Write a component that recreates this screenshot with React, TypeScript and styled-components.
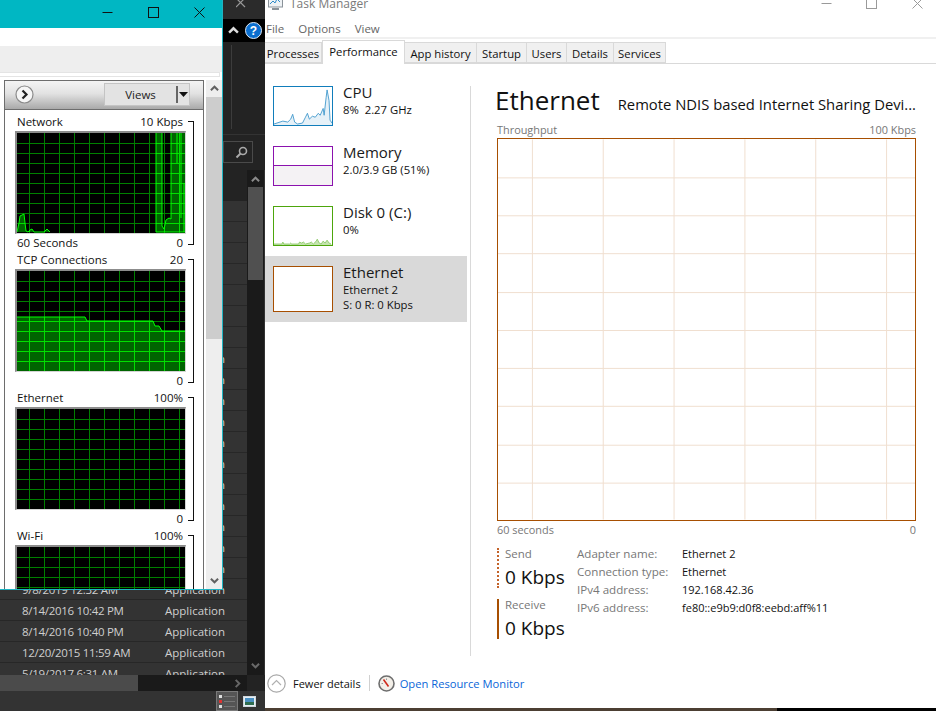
import React from "react";
import styled, { createGlobalStyle } from "styled-components";

const Global = createGlobalStyle`
  html, body { margin: 0; padding: 0; background: #000; }
  * { box-sizing: border-box; }
`;

const FONT = `"Open Sans", "Noto Sans", sans-serif`;

const Desktop = styled.div`
  position: relative;
  width: 936px;
  height: 711px;
  overflow: hidden;
  font-family: ${FONT};
  background: linear-gradient(to right, #4c3f33 777px, #000 777px);
`;

/* ---------- dark window behind ---------- */
const DarkWindow = styled.div`
  position: absolute;
  left: 0;
  top: 0;
  width: 265px;
  height: 711px;
  display: flex;
  flex-direction: column;
  background: #333;
  color: #d0d0d0;
`;
const DarkTitle = styled.div`
  height: 19px;
  background: #2b2b2b;
  display: flex;
  justify-content: flex-end;
  padding-right: 19px;
  overflow: hidden;
`;
const DarkBand = styled.div`
  height: 23px;
  background: #000;
  display: flex;
  align-items: center;
  justify-content: flex-end;
  gap: 6px;
  padding-right: 3px;
`;
const DarkRibbon = styled.div`
  height: 93px;
  background: #232323;
  border-bottom: 1px solid #333;
  display: flex;
  justify-content: flex-end;
  padding: 3px 33px 5px 0;
`;
const RibbonLine = styled.div`
  width: 1px;
  background: #3c3c3c;
`;
const DarkSearchRow = styled.div`
  height: 35px;
  background: #232323;
  display: flex;
  justify-content: flex-end;
  padding: 6px 12px 7px 0;
`;
const DarkSearch = styled.div`
  width: 30px;
  border: 1px solid #4a4a4a;
  display: flex;
  align-items: center;
  justify-content: center;
`;
const DarkListWrap = styled.div`
  flex: 1;
  display: flex;
  min-height: 0;
`;
const DarkList = styled.div`
  flex: 1;
  min-width: 0;
  overflow: hidden;
`;
const DarkHead = styled.div`
  height: 31px;
  background: #232323;
`;
const DarkRow = styled.div`
  height: 21px;
  padding-top: 1px;
  display: flex;
  align-items: center;
  border-bottom: 1px solid #272727;
  background: #333;
  font-size: 11.5px;
  color: #cfcfcf;
  white-space: nowrap;
  overflow: hidden;
`;
const DateCell = styled.span`
  width: 165px;
  padding-left: 22px;
  flex: none;
  letter-spacing: -0.3px;
`;
const DarkVScroll = styled.div`
  width: 17px;
  margin-right: 1px;
  background: #1a1a1a;
  display: flex;
  flex-direction: column;
  align-items: center;
  justify-content: space-between;
  padding: 5px 0 5px;
`;
const DarkVThumb = styled.div`
  width: 15px;
  height: 93px;
  background: #505050;
  margin-top: 3px;
`;
const Spacer = styled.div`
  flex: 1;
`;
const DarkHTrack = styled.div`
  height: 16px;
  background: #232323;
`;
const DarkHScroll = styled.div`
  height: 16px;
  background: #1a1a1a;
  display: flex;
  align-items: center;
  margin-right: 18px;
`;
const DarkHThumb = styled.div`
  width: 138px;
  height: 16px;
  background: #4b4b4b;
`;
const DarkHArrow = styled.div`
  margin-left: auto;
  margin-right: 5px;
  display: flex;
`;
const DarkStatus = styled.div`
  height: 20px;
  background: #333;
  display: flex;
  justify-content: flex-end;
  align-items: stretch;
  gap: 5px;
  padding-right: 9px;
`;
const ViewToggle = styled.div<{ $on?: boolean }>`
  width: ${(p) => (p.$on ? 22 : 13)}px;
  display: flex;
  align-items: center;
  justify-content: center;
  background: ${(p) => (p.$on ? "#555" : "transparent")};
  border: ${(p) => (p.$on ? "1px solid #7a7a7a" : "0")};
`;

/* ---------- resource monitor window ---------- */
const MonitorWindow = styled.div`
  position: absolute;
  left: 0;
  top: 0;
  width: 223px;
  height: 590px;
  background: #fff;
  border-right: 1px solid #1fb4c2;
  border-bottom: 1px solid #1fb4c2;
  display: flex;
  flex-direction: column;
  overflow: hidden;
`;
const MonitorTitle = styled.div`
  height: 28px;
  flex: none;
  background: #00b7c3;
  display: flex;
  justify-content: flex-end;
`;
const MonitorBtn = styled.div`
  width: 46px;
  height: 25px;
  display: flex;
  align-items: center;
  justify-content: center;
`;
const MonitorMenu = styled.div`
  height: 18px;
  flex: none;
  background: #fff;
`;
const MonitorBand = styled.div`
  height: 26px;
  flex: none;
  background: #eee;
`;
const MonitorRule = styled.div`
  height: 5px;
  flex: none;
  margin-right: 2px;
  background: #fff;
  border: 1px solid #e4e4e4;
  border-left: 0;
`;
const MonitorBody = styled.div`
  flex: 1;
  min-height: 0;
  display: flex;
  padding: 3px 0 0 4px;
`;
const Panel = styled.div`
  width: 200px;
  border: 1px solid #6d6d6d;
  border-bottom: 0;
  display: flex;
  flex-direction: column;
  overflow: hidden;
  font-size: 11.5px;
  color: #111;
`;
const PanelHead = styled.div`
  height: 29px;
  flex: none;
  background: linear-gradient(#f4f4f4, #e2e2e2 45%, #a9a9a9);
  border-bottom: 1px solid #6d6d6d;
  display: flex;
  align-items: center;
  justify-content: space-between;
  padding: 0 13px 2px 10px;
`;
const ViewsBtn = styled.div`
  width: 86px;
  height: 23px;
  background: #e3e3e3;
  border: 1px solid #c4c4c4;
  display: flex;
  align-items: center;
  font-size: 11.5px;
  color: #222;
`;
const ViewsLabel = styled.span`
  flex: 1;
  text-align: center;
`;
const ViewsCaret = styled.span`
  width: 13px;
  height: 17px;
  border-left: 2px solid #666;
  display: flex;
  align-items: center;
  justify-content: center;
`;
const PanelBody = styled.div`
  padding: 3px 0 0 10px;
`;
const GraphBlock = styled.div`
  display: flex;
  height: 138px;
`;
const GraphCol = styled.div`
  width: 171px;
  flex: none;
`;
const GraphTop = styled.div`
  height: 18px;
  padding: 0 3px 2px 2px;
  display: flex;
  align-items: center;
  justify-content: space-between;
  white-space: nowrap;
`;
const GraphFoot = styled.div`
  height: 17px;
  padding: 0 3px 0 2px;
  display: flex;
  align-items: center;
  justify-content: space-between;
  white-space: nowrap;
`;
const GraphFrame = styled.div`
  height: 103px;
  border-top: 2px solid #8c8c8c;
  border-left: 2px solid #8c8c8c;
  border-right: 1px solid #d4d4d4;
  border-bottom: 1px solid #d4d4d4;
  background: #000;
  display: flex;
`;
const Bracket = styled.div`
  width: 6px;
  flex: none;
  margin: 8px 0 6px 2px;
  border: 1px solid #111;
  border-left: 0;
`;
const VScroll = styled.div`
  width: 16px;
  margin-left: 2px;
  background: #eee;
  display: flex;
  flex-direction: column;
  align-items: center;
  justify-content: space-between;
  padding: 4px 0 4px;
`;
const VThumb = styled.div`
  width: 16px;
  height: 242px;
  background: #cdcdcd;
  margin-top: 4px;
`;

/* ---------- task manager ---------- */
const TaskWindow = styled.div`
  position: absolute;
  left: 265px;
  top: 0;
  width: 671px;
  height: 708px;
  background: #fff;
  display: flex;
  flex-direction: column;
  overflow: hidden;
  font-size: 11.5px;
  color: #111;
`;
const TaskTitle = styled.div`
  height: 20px;
  flex: none;
  display: flex;
  justify-content: space-between;
  overflow: hidden;
`;
const TaskName = styled.div`
  display: flex;
  gap: 7px;
  padding-left: 3px;
  margin-top: -6px;
  height: 18px;
  align-items: center;
  color: #7a7a7a;
  font-size: 12px;
`;
const TaskCtrls = styled.div`
  display: flex;
  margin-right: -4px;
  margin-top: -3px;
  height: 12px;
`;
const TaskCtrl = styled.div`
  width: 45.5px;
  display: flex;
  align-items: center;
  justify-content: center;
`;
const MenuBar = styled.div`
  height: 17px;
  flex: none;
  display: flex;
  align-items: center;
  gap: 14px;
  padding-left: 1px;
  color: #666;
`;
const MenuRule = styled.div`
  height: 2px;
  flex: none;
  background: #f0f0f0;
`;
const TabBar = styled.div`
  height: 25px;
  flex: none;
  display: flex;
  align-items: flex-end;
  border-bottom: 1px solid #d9d9d9;
`;
const Tab = styled.div<{ $w: number; $on?: boolean }>`
  width: ${(p) => p.$w}px;
  height: ${(p) => (p.$on ? 24 : 21)}px;
  margin-bottom: ${(p) => (p.$on ? -1 : 0)}px;
  padding-bottom: ${(p) => (p.$on ? 3 : 0)}px;
  padding-top: ${(p) => (p.$on ? 0 : 1)}px;
  background: ${(p) => (p.$on ? "#fff" : "#f0f0f0")};
  border: 1px solid #d9d9d9;
  border-bottom: ${(p) => (p.$on ? 0 : "1px solid #d9d9d9")};
  border-left: ${(p) => (p.$on ? "1px solid #d9d9d9" : 0)};
  display: flex;
  align-items: center;
  justify-content: center;
  white-space: nowrap;
  color: #111;
  font-size: 11.3px;
`;
const TaskBody = styled.div`
  flex: 1;
  min-height: 0;
  display: flex;
`;
const Sidebar = styled.div`
  width: 202px;
  flex: none;
  padding-top: 12px;
`;
const SideItem = styled.div<{ $h: number; $on?: boolean }>`
  height: ${(p) => p.$h}px;
  display: flex;
  gap: 10px;
  padding: 0 8px;
  background: ${(p) => (p.$on ? "#d9d9d9" : "transparent")};
`;
const Thumb = styled.div<{ $c: string }>`
  width: 60px;
  flex: none;
  margin: 10px 0;
  border: 1px solid ${(p) => p.$c};
  background: #fff;
  display: flex;
  flex-direction: column;
`;
const MemFree = styled.div`
  height: 18px;
  flex: none;
`;
const MemUsed = styled.div`
  flex: 1;
  background: #f4f2f4;
  border-top: 1px solid #8b12ae;
`;
const SideText = styled.div`
  padding: 6px 0 0 0;
`;
const SideName = styled.div`
  font-size: 15px;
  line-height: 20px;
  color: #1a1a1a;
`;
const SideSub = styled.div`
  font-size: 11.3px;
  line-height: 16px;
  white-space: pre;
`;
const SideLast = styled(SideSub)`
  margin-top: -1px;
`;
const SideDivider = styled.div`
  width: 1px;
  flex: none;
  height: 570px;
  margin: 22px 0 0 3px;
  background: #d9d9d9;
`;
const Main = styled.div`
  flex: 1;
  min-width: 0;
  padding: 0 20px 0 26px;
`;
const Heading = styled.div`
  height: 56px;
  padding-top: 16px;
  margin-left: -2px;
  display: flex;
  justify-content: space-between;
  align-items: baseline;
  white-space: nowrap;
`;
const HeadingMain = styled.span`
  font-size: 26px;
  line-height: 40px;
  color: #111;
`;
const HeadingSub = styled.span`
  font-size: 14.8px;
  color: #111;
`;
const AxisRow = styled.div`
  height: 18px;
  display: flex;
  justify-content: space-between;
  align-items: center;
  color: #777;
  font-size: 10.9px;
`;
const BigChart = styled.div`
  height: 383px;
  border: 1px solid #a74f01;
  display: flex;
`;
const AxisBottom = styled(AxisRow)`
  height: 17px;
`;
const Stats = styled.div`
  margin-top: 6px;
  display: flex;
`;
const Rates = styled.div`
  width: 80px;
  flex: none;
  padding-top: 4px;
  display: flex;
  flex-direction: column;
  gap: 11px;
`;
const Rate = styled.div<{ $dotted?: boolean }>`
  height: 40px;
  padding-left: 6px;
  border-left: 2px ${(p) => (p.$dotted ? "dotted #c4632a" : "solid #a74f01")};
`;
const RateLabel = styled.div`
  height: 12px;
  line-height: 12px;
  color: #777;
  font-size: 11.5px;
`;
const RateValue = styled.div`
  margin-top: 2px;
  line-height: 30px;
  height: 30px;
  font-size: 19px;
  color: #111;
  white-space: nowrap;
`;
const Props = styled.div`
  display: grid;
  grid-template-columns: 105px auto;
  grid-auto-rows: 18px;
  align-items: center;
`;
const PropKey = styled.div`
  color: #777;
  white-space: nowrap;
  font-size: 11.6px;
`;
const PropVal = styled.div`
  color: #111;
  white-space: nowrap;
  font-size: 11px;
`;
const Footer = styled.div`
  height: 40px;
  flex: none;
  margin-bottom: 5px;
  display: flex;
  align-items: center;
  padding-left: 2px;
`;
const FewerLabel = styled.span`
  margin-left: 7px;
  color: #111;
  font-size: 11px;
`;
const FootSep = styled.div`
  width: 1px;
  height: 16px;
  margin: 0 8px 0 8px;
  background: #d0d0d0;
`;
const FootLink = styled.a`
  margin-left: 5px;
  color: #0a66d8;
  text-decoration: none;
  font-size: 11.2px;
`;

/* ---------- drawings ---------- */
const Chevron = ({ dir, c = "#bbb", w = 9 }: { dir: "u" | "d" | "r"; c?: string; w?: number }) => {
  const d = dir === "u" ? "M1 7 L5 3 L9 7" : dir === "d" ? "M1 3 L5 7 L9 3" : "M3 1 L7 5 L3 9";
  return (
    <svg width={w} height={w} viewBox="0 0 10 10">
      <path d={d} fill="none" stroke={c} strokeWidth="2.2" />
    </svg>
  );
};

const Glyph = ({ kind, c, s = 11 }: { kind: "min" | "max" | "x"; c: string; s?: number }) => (
  <svg width={s} height={s} viewBox="0 0 11 11">
    {kind === "min" && <path d="M0.5 5.5 H10.5" stroke={c} strokeWidth="1" />}
    {kind === "max" && <rect x="0.5" y="0.5" width="10" height="10" fill="none" stroke={c} />}
    {kind === "x" && <path d="M0.5 0.5 L10.5 10.5 M10.5 0.5 L0.5 10.5" stroke={c} />}
  </svg>
);

const vLines = Array.from({ length: 11 }, (_, i) => 12.5 + i * 15);
const hLines = Array.from({ length: 10 }, (_, i) => 10.5 + i * 10);

type GraphProps = { id: string; fills?: string[]; lines?: string[] };
const GraphPlot = ({ id, fills = [], lines = [] }: GraphProps) => (
  <svg width="168" height="100" viewBox="0 0 168 100" style={{ display: "block" }}>
    <defs>
      <clipPath id={id}>
        {fills.map((p) => (
          <polygon key={p} points={p} />
        ))}
      </clipPath>
    </defs>
    {vLines.map((x) => (
      <line key={x} x1={x} x2={x} y1={0} y2={100} stroke="#008000" />
    ))}
    {hLines.map((y) => (
      <line key={y} x1={0} x2={168} y1={y} y2={y} stroke="#008000" />
    ))}
    {fills.map((p) => (
      <polygon key={p} points={p} fill="#006400" />
    ))}
    <g clipPath={`url(#${id})`}>
      {vLines.map((x) => (
        <line key={x} x1={x} x2={x} y1={0} y2={100} stroke="#00e000" />
      ))}
      {hLines.map((y) => (
        <line key={y} x1={0} x2={168} y1={y} y2={y} stroke="#00e000" />
      ))}
    </g>
    {lines.map((p) => (
      <polyline key={p} points={p} fill="none" stroke="#00ff00" />
    ))}
  </svg>
);

const NET_FILLS = [
  "0,99 2,90 3,83 7,81 8,90 9,98 11,99 13,97 15,96 17,99 27,99 30,96 33,99",
  "139,99 139,0 145,0 145,93 147,96 149,87 152,85 154,86 154,0 168,0 168,99",
];
const NET_LINES = [
  "0,99 2,90 3,83 7,81 8,90 9,98 11,99 13,97 15,96 17,99 27,99 30,96 33,99",
  "139,0 139,99",
  "145,0 145,93 147,96 149,87 152,85 154,86 154,0",
  "160,0 160,30",
  "164,0 164,85",
  "167,50 167,99",
  "139,99 168,99",
];
const TCP_FILL = ["0,46 68,46 70,50 136,50 138,55 142,55 145,60 168,60 168,100 0,100"];
const TCP_LINE = ["0,46 68,46 70,50 136,50 138,55 142,55 145,60 168,60"];

type GBProps = { name: string; max: string; foot?: string; end?: string; plot: GraphProps };
const Graph = ({ name, max, foot, end, plot }: GBProps) => (
  <GraphBlock>
    <GraphCol>
      <GraphTop>
        <span>{name}</span>
        <span>{max}</span>
      </GraphTop>
      <GraphFrame>
        <GraphPlot {...plot} />
      </GraphFrame>
      <GraphFoot>
        <span>{foot}</span>
        <span>{end}</span>
      </GraphFoot>
    </GraphCol>
    <Bracket />
  </GraphBlock>
);

const CPU_PTS =
  "0,38 9,35 14,36 17,33 19,28 21,36 24,38 29,37 32,31 34,27 36,33 39,30 42,31 45,27 47,29 50,22 51,29 53,11 54,3 56,14 57,34 59,37";
const DISK_PTS =
  "0,38 8,38 9,36 10,38 16,38 17,37 18,38 25,38 26,36 28,37 30,36 32,38 36,37 38,36 40,38 43,35 44,33 46,37 48,38 50,35 52,37 54,34 56,37 58,38";

const Spark = ({ pts, stroke, fill }: { pts: string; stroke: string; fill: string }) => (
  <svg width="58" height="38" viewBox="0 0 59 39" preserveAspectRatio="none" style={{ display: "block" }}>
    <polygon points={`${pts} 59,39 0,39`} fill={fill} />
    <polyline points={pts} fill="none" stroke={stroke} strokeWidth="0.9" />
  </svg>
);

const bigV = [34, 105, 176, 247, 318, 389];
const bigH = [38, 76.5, 114.5, 153, 191, 229, 267, 306, 344];

const dates = [
  "9/8/2019 12:32 AM",
  "8/14/2016 10:42 PM",
  "8/14/2016 10:40 PM",
  "12/20/2015 11:59 AM",
  "5/19/2017 6:31 AM",
];

export default function App() {
  return (
    <Desktop>
      <Global />
      <DarkWindow>
        <DarkTitle>
          <svg width="10" height="10" viewBox="0 0 10 10" style={{ marginTop: -2 }}>
            <path d="M0 0 L9 9 M9 0 L0 9" stroke="#999" strokeWidth="1.2" />
          </svg>
        </DarkTitle>
        <DarkBand>
          <Chevron dir="u" c="#ddd" w={11} />
          <svg width="17" height="17" viewBox="0 0 17 17">
            <circle cx="8.5" cy="8.5" r="8" fill="#0b6fd0" stroke="#dfe9f5" />
            <text x="8.5" y="13" textAnchor="middle" fontSize="12" fontWeight="700" fill="#fff" fontFamily="Liberation Sans">
              ?
            </text>
          </svg>
        </DarkBand>
        <DarkRibbon>
          <RibbonLine />
        </DarkRibbon>
        <DarkSearchRow>
          <DarkSearch>
            <svg width="13" height="13" viewBox="0 0 13 13" style={{ marginLeft: 6 }}>
              <circle cx="8" cy="5" r="3.5" fill="none" stroke="#aaa" strokeWidth="1.6" />
              <path d="M5.5 7.5 L1.5 11.5" stroke="#aaa" strokeWidth="2" />
            </svg>
          </DarkSearch>
        </DarkSearchRow>
        <DarkListWrap>
          <DarkList>
            <DarkHead />
            {Array.from({ length: 23 }, (_, i) => i).map((i) => {
              const d = i >= 18 ? dates[i - 18] : "";
              return (
                <DarkRow key={i}>
                  <DateCell>{d}</DateCell>
                  {i >= 7 ? "Application" : ""}
                </DarkRow>
              );
            })}
          </DarkList>
          <DarkVScroll>
            <Chevron dir="u" c="#8a8a8a" />
            <DarkVThumb />
            <Spacer />
            <Chevron dir="d" c="#6a6a6a" />
          </DarkVScroll>
        </DarkListWrap>
        <DarkHTrack>
          <DarkHScroll>
            <DarkHThumb />
            <DarkHArrow>
              <Chevron dir="r" c="#666" />
            </DarkHArrow>
          </DarkHScroll>
        </DarkHTrack>
        <DarkStatus>
          <ViewToggle $on>
            <svg width="16" height="15" viewBox="0 0 16 15">
              <rect x="0" y="1" width="3" height="3" fill="#ddd" />
              <rect x="0" y="6" width="3" height="3" fill="#d33" />
              <rect x="0" y="11" width="3" height="3" fill="#ddd" />
              <path d="M5 2.5 H16 M5 7.5 H16 M5 12.5 H16" stroke="#777" />
            </svg>
          </ViewToggle>
          <ViewToggle>
            <svg width="13" height="11" viewBox="0 0 13 11">
              <rect x="0.5" y="0.5" width="12" height="10" fill="#e6eef4" stroke="#cfd8de" />
              <rect x="2" y="2" width="9" height="4" fill="#4a90c2" />
              <rect x="2" y="6" width="9" height="3" fill="#2f6d50" />
            </svg>
          </ViewToggle>
        </DarkStatus>
      </DarkWindow>

      <MonitorWindow>
        <MonitorTitle>
          <MonitorBtn>
            <Glyph kind="min" c="#111" />
          </MonitorBtn>
          <MonitorBtn>
            <Glyph kind="max" c="#111" />
          </MonitorBtn>
          <MonitorBtn>
            <Glyph kind="x" c="#111" />
          </MonitorBtn>
        </MonitorTitle>
        <MonitorMenu />
        <MonitorBand />
        <MonitorRule />
        <MonitorBody>
          <Panel>
            <PanelHead>
              <svg width="19" height="19" viewBox="0 0 19 19">
                <circle cx="9.5" cy="9.5" r="8.5" fill="#f6f6f6" stroke="#8a8a8a" strokeWidth="1.2" />
                <path d="M7.5 5.5 L11.5 9.5 L7.5 13.5" fill="none" stroke="#222" strokeWidth="2.2" />
              </svg>
              <ViewsBtn>
                <ViewsLabel>Views</ViewsLabel>
                <ViewsCaret>
                  <svg width="9" height="5" viewBox="0 0 9 5">
                    <path d="M0 0 H9 L4.5 5 Z" fill="#111" />
                  </svg>
                </ViewsCaret>
              </ViewsBtn>
            </PanelHead>
            <PanelBody>
              <Graph name="Network" max="10 Kbps" foot="60 Seconds" end="0" plot={{ id: "g1", fills: NET_FILLS, lines: NET_LINES }} />
              <Graph name="TCP Connections" max="20" end="0" plot={{ id: "g2", fills: TCP_FILL, lines: TCP_LINE }} />
              <Graph name="Ethernet" max="100%" end="0" plot={{ id: "g3" }} />
              <Graph name="Wi-Fi" max="100%" plot={{ id: "g4" }} />
            </PanelBody>
          </Panel>
          <VScroll>
            <Chevron dir="u" c="#606060" />
            <VThumb />
            <Spacer />
            <Chevron dir="d" c="#606060" />
          </VScroll>
        </MonitorBody>
      </MonitorWindow>

      <TaskWindow>
        <TaskTitle>
          <TaskName>
            <svg width="15" height="15" viewBox="0 0 15 15">
              <rect x="0.5" y="1" width="14" height="10" fill="#eef2f5" stroke="#8a9299" />
              <path d="M2 8 L5 5 L7 7 L9 3 L12 6" fill="none" stroke="#2e8bc9" strokeWidth="1" />
              <rect x="4" y="12" width="7" height="2" fill="#8a9299" />
            </svg>
            <span>Task Manager</span>
          </TaskName>
          <TaskCtrls>
            <TaskCtrl>
              <Glyph kind="min" c="#9a9a9a" />
            </TaskCtrl>
            <TaskCtrl>
              <Glyph kind="max" c="#9a9a9a" />
            </TaskCtrl>
            <TaskCtrl>
              <Glyph kind="x" c="#9a9a9a" />
            </TaskCtrl>
          </TaskCtrls>
        </TaskTitle>
        <MenuBar>
          <span>File</span>
          <span>Options</span>
          <span>View</span>
        </MenuBar>
        <MenuRule />
        <TabBar>
          <Tab $w={57}>Processes</Tab>
          <Tab $w={83} $on>
            Performance
          </Tab>
          <Tab $w={72}>App history</Tab>
          <Tab $w={50}>Startup</Tab>
          <Tab $w={40}>Users</Tab>
          <Tab $w={47}>Details</Tab>
          <Tab $w={52}>Services</Tab>
        </TabBar>
        <TaskBody>
          <Sidebar>
            <SideItem $h={60}>
              <Thumb $c="#117dbb">
                <Spark pts={CPU_PTS} stroke="#3f97cc" fill="#e6f1f8" />
              </Thumb>
              <SideText>
                <SideName>CPU</SideName>
                <SideSub>8%  2.27 GHz</SideSub>
              </SideText>
            </SideItem>
            <SideItem $h={60}>
              <Thumb $c="#8b12ae">
                <MemFree />
                <MemUsed />
              </Thumb>
              <SideText>
                <SideName>Memory</SideName>
                <SideSub>2.0/3.9 GB (51%)</SideSub>
              </SideText>
            </SideItem>
            <SideItem $h={60}>
              <Thumb $c="#4da60c">
                <Spark pts={DISK_PTS} stroke="#8ec96a" fill="#c4e4ae" />
              </Thumb>
              <SideText>
                <SideName>Disk 0 (C:)</SideName>
                <SideSub>0%</SideSub>
              </SideText>
            </SideItem>
            <SideItem $h={66} $on>
              <Thumb $c="#a74f01" />
              <SideText>
                <SideName>Ethernet</SideName>
                <SideSub>Ethernet 2</SideSub>
                <SideLast>S: 0 R: 0 Kbps</SideLast>
              </SideText>
            </SideItem>
          </Sidebar>
          <SideDivider />
          <Main>
            <Heading>
              <HeadingMain>Ethernet</HeadingMain>
              <HeadingSub>Remote NDIS based Internet Sharing Devi...</HeadingSub>
            </Heading>
            <AxisRow>
              <span>Throughput</span>
              <span>100 Kbps</span>
            </AxisRow>
            <BigChart>
              <svg width="418" height="381" viewBox="0 0 418 381" style={{ display: "block" }}>
                {bigV.map((x) => (
                  <line key={x} x1={x + 0.5} x2={x + 0.5} y1={0} y2={381} stroke="#f0dfd0" />
                ))}
                {bigH.map((y) => (
                  <line key={y} x1={0} x2={418} y1={Math.floor(y) + 0.5} y2={Math.floor(y) + 0.5} stroke="#f0dfd0" />
                ))}
              </svg>
            </BigChart>
            <AxisBottom>
              <span>60 seconds</span>
              <span>0</span>
            </AxisBottom>
            <Stats>
              <Rates>
                <Rate $dotted>
                  <RateLabel>Send</RateLabel>
                  <RateValue>0 Kbps</RateValue>
                </Rate>
                <Rate>
                  <RateLabel>Receive</RateLabel>
                  <RateValue>0 Kbps</RateValue>
                </Rate>
              </Rates>
              <Props>
                <PropKey>Adapter name:</PropKey>
                <PropVal>Ethernet 2</PropVal>
                <PropKey>Connection type:</PropKey>
                <PropVal>Ethernet</PropVal>
                <PropKey>IPv4 address:</PropKey>
                <PropVal>192.168.42.36</PropVal>
                <PropKey>IPv6 address:</PropKey>
                <PropVal>fe80::e9b9:d0f8:eebd:aff%11</PropVal>
              </Props>
            </Stats>
          </Main>
        </TaskBody>
        <Footer>
          <svg width="19" height="19" viewBox="0 0 19 19">
            <circle cx="9.5" cy="9.5" r="8.7" fill="#fff" stroke="#a8a8a8" strokeWidth="1.2" />
            <path d="M5 11 L9.5 6.5 L14 11" fill="none" stroke="#b0b0b0" strokeWidth="1.2" />
          </svg>
          <FewerLabel>Fewer details</FewerLabel>
          <FootSep />
          <svg width="17" height="17" viewBox="0 0 17 17">
            <circle cx="8.5" cy="8.5" r="7.5" fill="#f3efe8" stroke="#6e6e6e" strokeWidth="1.6" />
            <path d="M5.5 4.5 L10.5 11.5" stroke="#cf2a1c" strokeWidth="1.6" />
            <path d="M3.5 8.5 H5 M8.5 3.5 V5" stroke="#999" />
          </svg>
          <FootLink>Open Resource Monitor</FootLink>
        </Footer>
      </TaskWindow>
    </Desktop>
  );
}
